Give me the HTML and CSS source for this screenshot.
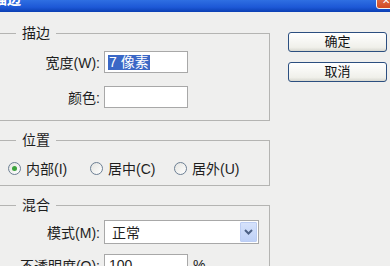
FILE: index.html
```html
<!DOCTYPE html>
<html>
<head>
    <title>描边</title>
    <link rel="stylesheet" href="styles.css">
</head>
<body>
    <div class="window">
        <div class="titlebar">
            <span class="title">描边</span>
            <span class="close">✕</span>
        </div>
        <div class="content">
            <div class="groups">
                <fieldset class="group group-stroke">
                    <legend>描边</legend>
                    <div class="field">
                        <label>宽度(W):</label>
                        <div class="input"><span class="selected">7 像素</span></div>
                    </div>
                    <div class="field field-color">
                        <label>颜色:</label>
                        <div class="input"></div>
                    </div>
                </fieldset>

                <fieldset class="group group-position">
                    <legend>位置</legend>
                    <div class="radios">
                        <div class="radio-item item-inside"><span class="radio checked"></span>内部(I)</div>
                        <div class="radio-item item-center"><span class="radio"></span>居中(C)</div>
                        <div class="radio-item"><span class="radio"></span>居外(U)</div>
                    </div>
                </fieldset>

                <fieldset class="group group-blend">
                    <legend>混合</legend>
                    <div class="field">
                        <label>模式(M):</label>
                        <div class="select">
                            <span class="select-value">正常</span>
                            <span class="select-arrow">
                                <svg width="9" height="6" viewBox="0 0 9 6"><path d="M1 1 L4.5 4.5 L8 1" fill="none" stroke="#4d6185" stroke-width="2"/></svg>
                            </span>
                        </div>
                    </div>
                    <div class="field field-opacity">
                        <label>不透明度(O):</label>
                        <div class="input"><span class="value">100</span></div>
                        <span class="unit">%</span>
                    </div>
                </fieldset>
            </div>

            <div class="actions">
                <button class="btn">确定</button>
                <button class="btn">取消</button>
            </div>
        </div>
    </div>
</body>
</html>
```

FILE: styles.css
```css
body {
    margin: 0;
    width: 390px;
    height: 266px;
    overflow: hidden;
    background-color: #efefee;
    font-family: "Liberation Sans", "Noto Sans CJK SC", sans-serif;
    font-size: 14px;
    color: #1e1e1e;
}

.titlebar {
    display: flex;
    height: 12px;
    overflow: hidden;
    background: linear-gradient(#2f6fe2, #1d58d6 60%, #0b3fb3);
}

.title {
    margin: -9px 0 0 -7px;
    color: #fff;
    font-weight: bold;
    line-height: 16px;
}

.close {
    margin: -8px -6px 0 auto;
    width: 20px;
    height: 17px;
    box-sizing: border-box;
    border: 1px solid #f4f4f4;
    border-radius: 3px;
    background: linear-gradient(#e8825f, #d24a22);
    color: #fff;
    font-size: 10px;
    line-height: 16px;
    text-align: center;
}

.content {
    display: flex;
}

.groups {
    width: 276px;
    margin-left: -6px;
}

/* group boxes */
.group {
    margin: 11px 0 0 0;
    padding: 0;
    border: 1px solid #b4b4b2;
}

.group-stroke {
    margin-top: 13px;
    padding: 10px 0 12px 0;
}

.group-position {
    padding: 12px 0 9px 0;
}

.group-blend {
    padding: 7px 0 20px 0;
}

.group legend {
    margin-left: 21px;
    padding: 0 6px;
    line-height: 16px;
    font-size: 14px;
}

.field {
    display: flex;
    align-items: center;
}

.field label {
    width: 109px;
    padding-right: 4px;
    box-sizing: border-box;
    text-align: right;
    white-space: nowrap;
}

.field-color {
    margin-top: 13px;
}

.field-opacity {
    margin-top: 10px;
}

.input {
    width: 84px;
    height: 22px;
    box-sizing: border-box;
    border: 1px solid #a8a8a8;
    background-color: #fff;
    display: flex;
    align-items: center;
    padding-left: 3px;
}

.selected {
    background-color: #3a67c6;
    color: #fff;
    padding: 0 1px;
    line-height: 15px;
}

.value {
    padding-left: 1px;
}

.unit {
    margin-left: 5px;
}

/* mode dropdown */
.select {
    width: 155px;
    height: 24px;
    box-sizing: border-box;
    border: 1px solid #a8a8a8;
    background-color: #fff;
    display: flex;
    align-items: center;
    padding: 1px;
}

.select-value {
    flex: 1;
    padding-left: 6px;
}

.select-arrow {
    width: 17px;
    height: 20px;
    box-sizing: border-box;
    border: 1px solid #bccdf3;
    border-radius: 1px;
    background: linear-gradient(#d6e2fb, #bfd1f7);
    display: flex;
    align-items: center;
    justify-content: center;
}

/* radio buttons */
.radios {
    display: flex;
    height: 16px;
    align-items: center;
    padding-left: 13px;
}

.radio-item {
    display: flex;
    align-items: center;
}

.item-inside {
    width: 82px;
}

.item-center {
    width: 84px;
}

.radio {
    width: 13px;
    height: 13px;
    box-sizing: border-box;
    border: 1px solid #6c7f94;
    border-radius: 50%;
    background: linear-gradient(135deg, #e4e4e0, #fff);
    margin-right: 5px;
    display: flex;
    align-items: center;
    justify-content: center;
}

.radio.checked::after {
    content: "";
    width: 5px;
    height: 5px;
    border-radius: 50%;
    background-color: #3ca33c;
}

/* buttons */
.actions {
    display: flex;
    flex-direction: column;
    gap: 10px;
    margin-left: 18px;
    padding-top: 20px;
}

.btn {
    width: 99px;
    height: 20px;
    padding: 0;
    border: 1px solid #2c4f80;
    border-radius: 3px;
    background: linear-gradient(#ffffff, #f0f0ea 80%, #d8d8d0);
    font-family: "Liberation Sans", "Noto Sans CJK SC", sans-serif;
    font-size: 13px;
    line-height: 18px;
    color: #111;
}
```
